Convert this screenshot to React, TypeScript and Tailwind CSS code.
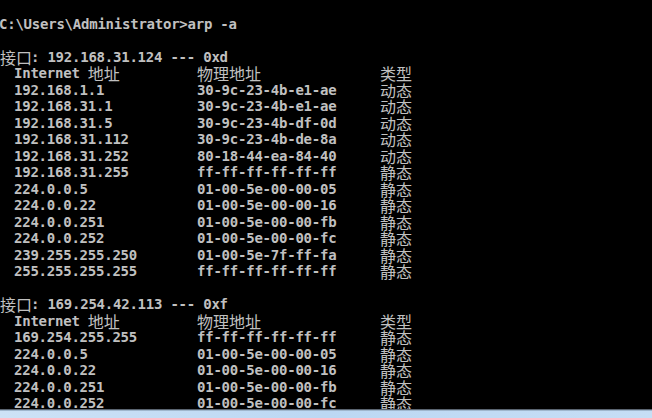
import React from "react";

type Entry = { ip: string; mac: string; kind: string };

const blocks: { iface: string; idx: string; rows: Entry[] }[] = [
  {
    iface: "192.168.31.124",
    idx: "0xd",
    rows: [
      { ip: "192.168.1.1", mac: "30-9c-23-4b-e1-ae", kind: "动态" },
      { ip: "192.168.31.1", mac: "30-9c-23-4b-e1-ae", kind: "动态" },
      { ip: "192.168.31.5", mac: "30-9c-23-4b-df-0d", kind: "动态" },
      { ip: "192.168.31.112", mac: "30-9c-23-4b-de-8a", kind: "动态" },
      { ip: "192.168.31.252", mac: "80-18-44-ea-84-40", kind: "动态" },
      { ip: "192.168.31.255", mac: "ff-ff-ff-ff-ff-ff", kind: "静态" },
      { ip: "224.0.0.5", mac: "01-00-5e-00-00-05", kind: "静态" },
      { ip: "224.0.0.22", mac: "01-00-5e-00-00-16", kind: "静态" },
      { ip: "224.0.0.251", mac: "01-00-5e-00-00-fb", kind: "静态" },
      { ip: "224.0.0.252", mac: "01-00-5e-00-00-fc", kind: "静态" },
      { ip: "239.255.255.250", mac: "01-00-5e-7f-ff-fa", kind: "静态" },
      { ip: "255.255.255.255", mac: "ff-ff-ff-ff-ff-ff", kind: "静态" },
    ],
  },
  {
    iface: "169.254.42.113",
    idx: "0xf",
    rows: [
      { ip: "169.254.255.255", mac: "ff-ff-ff-ff-ff-ff", kind: "静态" },
      { ip: "224.0.0.5", mac: "01-00-5e-00-00-05", kind: "静态" },
      { ip: "224.0.0.22", mac: "01-00-5e-00-00-16", kind: "静态" },
      { ip: "224.0.0.251", mac: "01-00-5e-00-00-fb", kind: "静态" },
      { ip: "224.0.0.252", mac: "01-00-5e-00-00-fc", kind: "静态" },
    ],
  },
];

const mono =
  "font-['DejaVu_Sans_Mono','Liberation_Mono',monospace] font-bold text-[14px] tracking-[-0.23px]";
const cjk = "font-['Noto_Sans_CJK_SC','Noto_Sans',sans-serif] font-normal text-[16px] leading-[16px]";

function Line({ children }: { children?: React.ReactNode }) {
  return <div className="h-[16.5px] leading-[16.5px] whitespace-pre flex items-center">{children}</div>;
}

export default function App() {
  return (
    <div className="w-[652px] h-[418px] flex flex-col bg-black overflow-hidden">
      {/* console body */}
      <div className="h-[409px] overflow-hidden pt-[15.5px] text-[#c0c0c0]">
        <Line>
          <span className={`${mono} -ml-[1px]`}>C:\Users\Administrator&gt;arp -a</span>
        </Line>
        <Line />
        {blocks.map((b, i) => (
          <div key={b.iface}>
            {i > 0 && <Line />}
            <Line>
              <span className={`${cjk} text-[15.5px] w-[31px]`}>接口</span>
              <span className={mono}>: {b.iface} --- {b.idx}</span>
            </Line>
            <Line>
              <div className="w-[197px] pl-[14px] flex items-center">
                <span className={mono}>Internet </span>
                <span className={cjk}>地址</span>
              </div>
              <div className={`w-[183px] ${cjk}`}>物理地址</div>
              <div className={cjk}>类型</div>
            </Line>
            {b.rows.map((r) => (
              <Line key={r.ip}>
                <div className={`w-[197px] pl-[14px] ${mono}`}>{r.ip}</div>
                <div className={`w-[183px] ${mono}`}>{r.mac}</div>
                <div className={cjk}>{r.kind}</div>
              </Line>
            ))}
          </div>
        ))}
      </div>
      {/* taskbar edge */}
      <div className="h-[1px] bg-[#5a6470]" />
      <div className="h-[1px] bg-[#9fb6cc]" />
      <div className="flex-1 bg-gradient-to-r from-[#cde2f6] via-[#bcd8f3] to-[#c6def5]" />
    </div>
  );
}
